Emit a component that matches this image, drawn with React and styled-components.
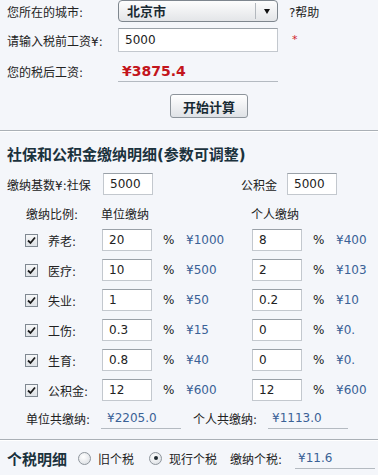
import React from "react";
import styled, { createGlobalStyle } from "styled-components";

const GlobalStyle = createGlobalStyle`
  body {
    margin: 0;
    background: #f4f6fa;
    font-family: "DejaVu Sans", "Noto Sans CJK SC", sans-serif;
    font-size: 12px;
    color: #222;
  }
  input, select, button {
    font-family: "DejaVu Sans", "Noto Sans CJK SC", sans-serif;
  }
`;

const Page = styled.div`
  width: 378px;
  height: 475px;
  overflow: hidden;
`;

const Section = styled.div`
  padding-left: ${p => p.$pl || 7}px;
`;

const FormRow = styled.div`
  display: flex;
  align-items: center;
  height: ${p => p.$h || 22}px;
  margin-top: ${p => p.$mt || 0}px;
`;

const Label = styled.span`
  width: ${p => p.$w || 111}px;
  margin-left: ${p => p.$ml || 0}px;
  flex-shrink: 0;
  white-space: nowrap;
`;

const SelectWrap = styled.div`
  position: relative;
  width: 160px;
  height: 22px;
`;

const Select = styled.select`
  appearance: none;
  width: 160px;
  height: 22px;
  margin: 0;
  padding: 0 0 0 8px;
  border: 1px solid #7e868e;
  border-radius: 4px;
  background: linear-gradient(#fdfdfd, #e3e5e8);
  font-size: 13px;
  font-weight: bold;
  color: #1a2a33;
  outline: none;
`;

const SelectArrow = styled.span`
  position: absolute;
  top: 3px;
  right: 1px;
  bottom: 3px;
  width: 21px;
  border-left: 1px solid #b3b8be;
  display: flex;
  align-items: center;
  justify-content: center;
  pointer-events: none;
  &::after {
    content: "";
    border-left: 3px solid transparent;
    border-right: 3px solid transparent;
    border-top: 5px solid #111;
  }
`;

const Help = styled.a`
  margin-left: 11px;
  color: #222;
  text-decoration: none;
`;

const TextInput = styled.input`
  box-sizing: border-box;
  width: ${p => p.$w || 50}px;
  height: ${p => p.$h || 22}px;
  margin: 0;
  padding: 0 0 0 6px;
  border: 1px solid #c3c8ce;
  border-top-color: #9aa1a8;
  background: #fff;
  font-size: 12px;
  color: #222;
  outline: none;
  flex-shrink: 0;
`;

const Required = styled.span`
  margin-left: 14px;
  color: #d0222a;
  font-size: 11px;
  align-self: flex-start;
  margin-top: 5px;
`;

const ResultField = styled.div`
  box-sizing: border-box;
  width: ${p => p.$w || 160}px;
  height: 22px;
  padding-left: ${p => p.$pl || 6}px;
  border-bottom: 1px solid #b4bac1;
  display: flex;
  align-items: center;
  flex-shrink: 0;
  color: ${p => (p.$red ? "#c3151c" : "#3a6196")};
  font-size: ${p => (p.$red ? 14 : 12)}px;
  font-weight: ${p => (p.$red ? "bold" : "normal")};
`;

const Button = styled.button`
  margin: 0 0 0 52px;
  width: 78px;
  height: 24px;
  padding: 0;
  border: 1px solid #8d949b;
  border-radius: 3px;
  background: linear-gradient(#ffffff, #dfe2e6);
  font-size: 13px;
  font-weight: bold;
  color: #172a33;
`;

const Divider = styled.div`
  margin-top: ${p => p.$mt || 0}px;
  height: 0;
  border-top: 1px solid #aab0b6;
  border-bottom: 1px solid #ffffff;
`;

const Heading = styled.h2`
  margin: 13px 0 0;
  font-size: 15px;
  line-height: 20px;
  font-weight: bold;
  color: #1b323d;
  white-space: nowrap;
`;

const Grid = styled.div`
  display: grid;
  grid-template-columns: 23px 54px 61px 23px 66px 61px 23px auto;
  grid-auto-rows: 30px;
  align-items: center;
  margin-top: 2px;
  padding-left: 25px;
`;

const GridHead = styled.div`
  display: grid;
  grid-template-columns: 75px 150px auto;
  align-items: center;
  height: 20px;
  margin-top: 8px;
  padding-left: 26px;
  white-space: nowrap;
`;

const Check = styled.span`
  box-sizing: border-box;
  width: 13px;
  height: 13px;
  border: 1px solid #7f8891;
  background: linear-gradient(#f6f7f8, #dde1e5);
  display: flex;
  align-items: center;
  justify-content: center;
`;

const Amount = styled.span`
  color: #3a6196;
  white-space: nowrap;
`;

const Pct = styled.span`
  color: #222;
`;

const Radio = styled.span`
  box-sizing: border-box;
  width: 13px;
  height: 13px;
  border-radius: 50%;
  border: 1px solid #8e959c;
  background: radial-gradient(circle at 40% 35%, #ffffff, #d6dadf);
  display: inline-flex;
  align-items: center;
  justify-content: center;
  margin-right: 7px;
  flex-shrink: 0;
  &::after {
    content: "";
    width: 4px;
    height: 4px;
    border-radius: 50%;
    background: ${p => (p.$on ? "#1f2a30" : "transparent")};
  }
`;

const RadioLabel = styled.span`
  display: inline-flex;
  align-items: center;
  margin-right: ${p => p.$mr || 0}px;
  white-space: nowrap;
`;

const SubTitle = styled.span`
  font-size: 15px;
  font-weight: bold;
  color: #1b323d;
  margin-right: 11px;
  white-space: nowrap;
`;

const CheckMark = () => (
  <svg width="9" height="9" viewBox="0 0 9 9">
    <path d="M1 4.5 L3.5 7 L8 1.5" fill="none" stroke="#1a1a1a" strokeWidth="1.8" />
  </svg>
);

const rows = [
  { name: "养老", unit: "20", unitAmt: "¥1000", per: "8", perAmt: "¥400" },
  { name: "医疗", unit: "10", unitAmt: "¥500", per: "2", perAmt: "¥103" },
  { name: "失业", unit: "1", unitAmt: "¥50", per: "0.2", perAmt: "¥10" },
  { name: "工伤", unit: "0.3", unitAmt: "¥15", per: "0", perAmt: "¥0." },
  { name: "生育", unit: "0.8", unitAmt: "¥40", per: "0", perAmt: "¥0." },
  { name: "公积金", unit: "12", unitAmt: "¥600", per: "12", perAmt: "¥600" },
];

export default function App() {
  return (
    <Page>
      <GlobalStyle />
      <Section>
        <FormRow $h={22}>
          <Label>您所在的城市:</Label>
          <SelectWrap>
            <Select defaultValue="北京市">
              <option>北京市</option>
            </Select>
            <SelectArrow />
          </SelectWrap>
          <Help href="#">?帮助</Help>
        </FormRow>
        <FormRow $h={24} $mt={6}>
          <Label>请输入税前工资¥:</Label>
          <TextInput $w={160} $h={24} defaultValue="5000" />
          <Required>*</Required>
        </FormRow>
        <FormRow $h={22} $mt={8}>
          <Label>您的税后工资:</Label>
          <ResultField $red $pl={4}>¥3875.4</ResultField>
        </FormRow>
        <FormRow $h={24} $mt={12}>
          <Label />
          <Button>开始计算</Button>
        </FormRow>
      </Section>

      <Divider $mt={12} />

      <Section>
        <Heading>社保和公积金缴纳明细(参数可调整)</Heading>
        <FormRow $h={22} $mt={8}>
          <Label $w={96}>缴纳基数¥:社保</Label>
          <TextInput defaultValue="5000" />
          <Label $w={46} $ml={88}>公积金</Label>
          <TextInput defaultValue="5000" />
        </FormRow>
      </Section>

      <GridHead>
        <span>缴纳比例:</span>
        <span>单位缴纳</span>
        <span>个人缴纳</span>
      </GridHead>

      <Grid>
        {rows.map(r => (
          <React.Fragment key={r.name}>
            <Check><CheckMark /></Check>
            <span>{r.name}:</span>
            <TextInput defaultValue={r.unit} />
            <Pct>%</Pct>
            <Amount>{r.unitAmt}</Amount>
            <TextInput defaultValue={r.per} />
            <Pct>%</Pct>
            <Amount>{r.perAmt}</Amount>
          </React.Fragment>
        ))}
      </Grid>

      <Section $pl={26}>
        <FormRow $h={22} $mt={2}>
          <Label $w={75}>单位共缴纳:</Label>
          <ResultField $w={80}>¥2205.0</ResultField>
          <Label $w={75} $ml={12}>个人共缴纳:</Label>
          <ResultField $w={80} $pl={4}>¥1113.0</ResultField>
        </FormRow>
      </Section>

      <Divider $mt={10} />

      <Section>
        <FormRow $h={22} $mt={6}>
          <SubTitle>个税明细</SubTitle>
          <RadioLabel $mr={15}><Radio />旧个税</RadioLabel>
          <RadioLabel $mr={13}><Radio $on />现行个税</RadioLabel>
          <Label $w={65}>缴纳个税:</Label>
          <ResultField $w={80} $pl={3}>¥11.6</ResultField>
        </FormRow>
      </Section>
    </Page>
  );
}
